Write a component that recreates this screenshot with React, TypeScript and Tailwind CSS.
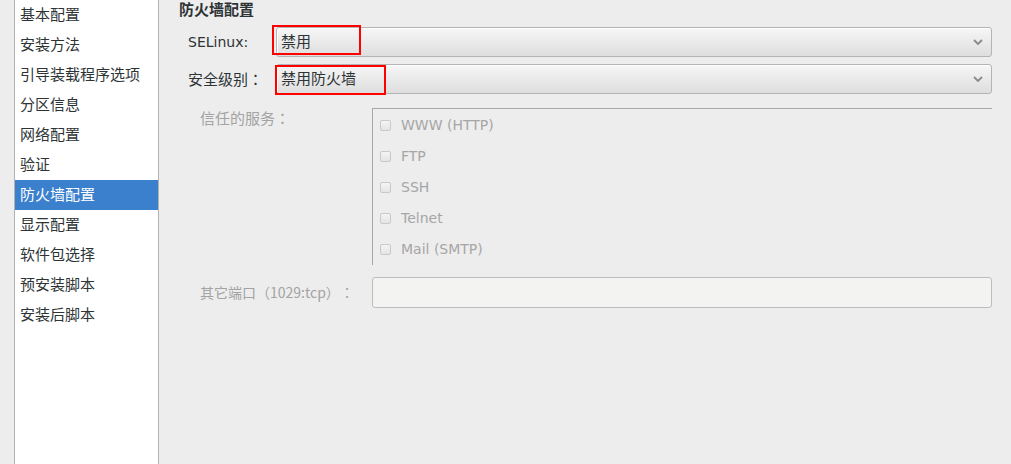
const navItems = [
  "基本配置",
  "安装方法",
  "引导装载程序选项",
  "分区信息",
  "网络配置",
  "验证",
  "防火墙配置",
  "显示配置",
  "软件包选择",
  "预安装脚本",
  "安装后脚本",
];

const services = ["WWW (HTTP)", "FTP", "SSH", "Telnet", "Mail (SMTP)"];

const font = "font-['DejaVu_Sans','Noto_Sans_CJK_SC',sans-serif]";
// full-width punctuation keeps its whole cell, as in the GTK dialog
const cjk = "font-['Noto_Sans_CJK_SC','DejaVu_Sans',sans-serif] [text-spacing-trim:space-all]";

// the TC face centres the colon in its cell
function Colon() {
  return <span className="font-['Noto_Sans_CJK_TC',sans-serif]">：</span>;
}

function Chevron() {
  return (
    <svg width="10" height="6" viewBox="0 0 10 6" className="shrink-0">
      <path d="M1 1 L5 5 L9 1" fill="none" stroke="#8a8a8a" strokeWidth="1.8" />
    </svg>
  );
}

function Select({ value }: { value: string }) {
  return (
    <div className="flex h-[30px] items-center justify-between rounded-[3px] border border-[#b4b4b4] bg-gradient-to-b from-[#f6f6f6] to-[#dedede] pl-[4px] pr-[8px] text-[15px] text-[#2e3436] shadow-[inset_1px_1px_0_#fff]">
      <span>{value}</span>
      <Chevron />
    </div>
  );
}

export default function App() {
  return (
    <div className={`relative flex h-[464px] w-[1011px] overflow-hidden bg-[#ededed] ${font}`}>
      <nav className="ml-[14px] w-[145px] shrink-0 border-x border-[#b2b2b2] bg-white">
        {navItems.map((item) => (
          <div
            key={item}
            className={`flex h-[30px] items-center pl-[5px] text-[15px] ${
              item === "防火墙配置" ? "bg-[#3b80cc] text-white" : "text-[#2e3436]"
            }`}
          >
            {item}
          </div>
        ))}
      </nav>

      <main className="flex flex-1 flex-col pl-[20px] pr-[19px]">
        <h2 className="flex h-[20px] items-center text-[15px] font-bold text-[#2e3436]">防火墙配置</h2>

        <div className="mt-[7px] flex flex-col gap-[7px] pl-[9px]">
          <div className="grid grid-cols-[88px_1fr] items-center">
            <span className="text-[14px] text-[#2e3436]">SELinux:</span>
            <Select value="禁用" />
          </div>
          <div className="grid grid-cols-[88px_1fr] items-center">
            <span className={`text-[15px] text-[#2e3436] ${cjk}`}>
              安全级别<Colon />
            </span>
            <Select value="禁用防火墙" />
          </div>
        </div>

        <div className="mt-[14px] grid grid-cols-[172px_1fr] pl-[21px]">
          <span className={`pt-[1px] text-[15px] leading-[18px] text-[#a3a3a3] ${cjk}`}>
            信任的服务<Colon />
          </span>
          <div className="border-l border-t border-[#a8a8a8] pt-[1px]">
            {services.map((s) => (
              <div key={s} className="flex h-[31px] items-center gap-[10px] pl-[7px]">
                <span className="h-[11px] w-[11px] rounded-[2px] border border-[#c9c9c9] bg-gradient-to-b from-[#f4f4f4] to-[#e4e4e4]" />
                <span className="text-[14px] text-[#a6a6a6]">{s}</span>
              </div>
            ))}
          </div>
        </div>

        <div className="mt-[12px] grid grid-cols-[172px_1fr] items-center pl-[21px]">
          <span className={`text-[14px] text-[#a3a3a3] ${cjk}`}>
            其它端口（1029:tcp）<Colon />
          </span>
          <div className="h-[31px] rounded-[3px] border border-[#bdbdbd] bg-[#f3f3f2]" />
        </div>
      </main>

      <div className="pointer-events-none absolute left-[272px] top-[25px] h-[30px] w-[89px] border-2 border-[#ff0000]" />
      <div className="pointer-events-none absolute left-[275px] top-[65px] h-[30px] w-[111px] border-2 border-[#ff0000]" />
    </div>
  );
}
